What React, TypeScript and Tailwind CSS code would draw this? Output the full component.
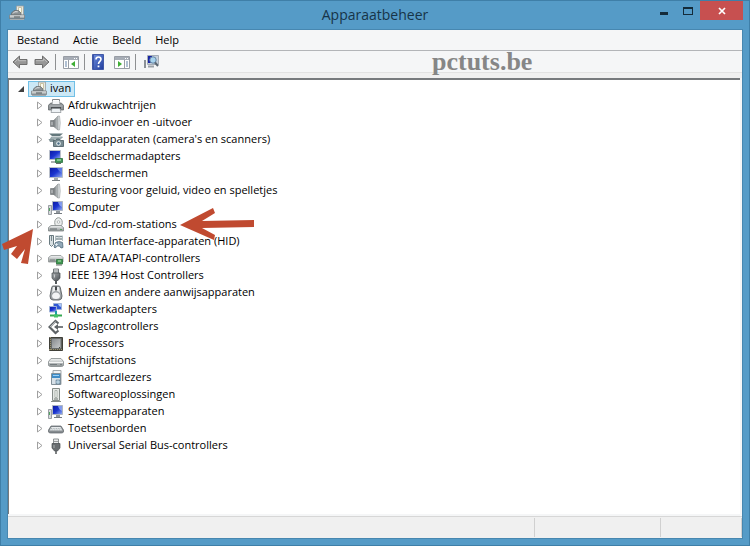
import type { ReactNode } from 'react';
import { clsx } from 'clsx';

interface Device {
  name: string;
  icon: ReactNode;
  marked?: boolean;
}

function Svg({ children }: { children: ReactNode }) {
  return (
    <svg viewBox="0 0 16 16" className="size-4 shrink-0" aria-hidden="true">
      {children}
    </svg>
  );
}

/* Gradients shared by all device icons */
function Gradients() {
  return (
    <svg className="absolute size-0" aria-hidden="true">
      <defs>
        <linearGradient id="metal" x1="0" y1="0" x2="0" y2="1">
          <stop offset="0" stopColor="#f4f6f6" />
          <stop offset="1" stopColor="#8d9394" />
        </linearGradient>
        <linearGradient id="dark" x1="0" y1="0" x2="1" y2="1">
          <stop offset="0" stopColor="#a9adb0" />
          <stop offset="1" stopColor="#4b5054" />
        </linearGradient>
        <linearGradient id="cone" x1="0" y1="0" x2="1" y2="0">
          <stop offset="0" stopColor="#6e7376" />
          <stop offset="1" stopColor="#c9cdcf" />
        </linearGradient>
        <linearGradient id="chip" x1="0" y1="0" x2="1" y2="1">
          <stop offset="0" stopColor="#84888b" />
          <stop offset="1" stopColor="#c9cccd" />
        </linearGradient>
        <linearGradient id="screen" x1="0" y1="0" x2="1" y2="1">
          <stop offset="0" stopColor="#0a18a0" />
          <stop offset="0.5" stopColor="#1c35d0" />
          <stop offset="1" stopColor="#9db8f4" />
        </linearGradient>
        <linearGradient id="help" x1="0" y1="0" x2="1" y2="1">
          <stop offset="0" stopColor="#6f8fe0" />
          <stop offset="1" stopColor="#1f3c9c" />
        </linearGradient>
      </defs>
    </svg>
  );
}

const ManagerIcon = () => (
  <Svg>
    <path d="M7.5 1h7v9h-7z" fill="#e4e8e5" stroke="#9aa09d" strokeWidth=".8" />
    <path d="M9.5 2.5h3v5h-3z" fill="#fbfaf0" stroke="#c0b78e" strokeWidth=".8" />
    <path d="M2.5 10V8L5 5.5h4.5L12 8v2z" fill="#8b9193" stroke="#656b6e" strokeWidth=".7" />
    <path d="M4 8.500 5.700 6.800h3" fill="none" stroke="#e6e8e9" />
    <path d="M.5 10h15v3.500H.5z" fill="url(#metal)" stroke="#777d80" strokeWidth=".7" />
    <path d="M5 12h6" stroke="#535a5d" />
    <path d="M1 14.500h14" stroke="#a6acae" />
  </Svg>
);

const PrinterIcon = () => (
  <Svg>
    <path d="M4.500 1.500h7v5h-7z" fill="#fff" stroke="#85898c" />
    <path d="M1.500 6 3 5h10l1.500 1 1 1.500V12H.5V7.500z" fill="#8f9497" stroke="#585d60" strokeWidth=".7" />
    <path d="M4.500 3h7v3h-7z" fill="#f5f6f7" />
    <path d="M1.500 8h13" stroke="#b4b8bb" />
    <path d="M3 10h10" stroke="#34393c" strokeWidth="1.500" />
    <path d="M4 10.500h8l1 4H3z" fill="#eef2f5" stroke="#888e92" strokeWidth=".7" />
  </Svg>
);

const SpeakerIcon = () => (
  <Svg>
    <path d="M2.500 5.500H6v6H2.500z" fill="#85898c" stroke="#6a6e71" strokeWidth=".6" />
    <path d="M5.500 5.500 10 1v14l-4.500-3.500z" fill="url(#cone)" stroke="#85898b" strokeWidth=".5" />
    <path d="M10 1h1.500q1.500 7 0 14H10z" fill="#dfe2e3" stroke="#999ea1" strokeWidth=".6" />
    <path d="M4 7v3" stroke="#c9ccce" />
  </Svg>
);

const CameraIcon = () => (
  <Svg>
    <path d="M1 1.500h14l-3 2.500H4z" fill="#63777b" />
    <path d="M3.500 5h11l-2 2h-10z" fill="#b8c5c7" stroke="#71858a" strokeWidth=".7" />
    <path d="M.5 7h6v3H2z" fill="#849599" />
    <path d="M5.500 8.500h2l1-1.500h3l1 1.500h3v6h-10z" fill="#788b91" stroke="#485b62" strokeWidth=".8" />
    <circle cx="10.500" cy="11.500" r="2.300" fill="#e5edf0" />
    <circle cx="10.500" cy="11.500" r="1.200" fill="#496b83" />
  </Svg>
);

const MonitorIcon = () => (
  <Svg>
    <path d="M1.500 1.500h13v10h-13z" fill="url(#screen)" stroke="#b9bfca" />
    <path d="M9 2h5v5q-3-1-5-5" fill="#6d90ec" opacity=".7" />
    <path d="M6 12h4v2H6z" fill="#a3a8ac" />
    <path d="M4 14.500h8" stroke="#777d81" />
  </Svg>
);

const AdapterIcon = () => (
  <Svg>
    <path d="M1.500 1.500h11v9h-11z" fill="url(#screen)" stroke="#b9bfca" />
    <path d="M3 13h5" stroke="#929799" strokeWidth="1.500" />
    <path d="M7.500 9.500h7v4h-7z" fill="#3d9554" stroke="#2a6f3f" strokeWidth=".8" />
    <path d="M9 11h4" stroke="#c5ecc9" />
    <path d="M8 14.500h5" stroke="#686f68" />
  </Svg>
);

const ComputerIcon = () => (
  <Svg>
    <path d="M.5 5.500h3v9h-3z" fill="#d6d9dc" stroke="#858b90" strokeWidth=".8" />
    <path d="M1.500 8v3" stroke="#52a260" />
    <path d="M4.500 1.500h10v9h-10z" fill="url(#screen)" stroke="#aeb6c2" />
    <path d="M10 2h4v5q-3-1-4-5" fill="#98b0f4" opacity=".8" />
    <path d="M8 11h4v2H8z" fill="#92989e" />
    <path d="M6 13.500h8" stroke="#737a80" />
  </Svg>
);

const DiscDriveIcon = () => (
  <Svg>
    <ellipse cx="10.500" cy="5.500" rx="3.800" ry="4.800" fill="#eceeed" stroke="#969c9b" />
    <circle cx="10.500" cy="5" r="1.300" fill="#fff" stroke="#a5aaa9" strokeWidth=".8" />
    <path d="M3 8.500h10l2.500 2v3.500H.5v-3.500z" fill="url(#metal)" stroke="#7f8585" strokeWidth=".8" />
    <path d="M2 12h7" stroke="#666d6e" />
    <path d="M12 12.500h2" stroke="#54a45b" />
  </Svg>
);

const HidIcon = () => (
  <Svg>
    <path d="M1.500 1.500h4v9l-2 2-2-2z" fill="#d9e0e2" stroke="#697a80" />
    <path d="M3.500 2v5" stroke="#77888e" />
    <path d="M7 2.500h8M7 5h8" stroke="#829297" strokeWidth="1.500" />
    <path d="M7.500 2v5M11 2v4M14.500 2v5" stroke="#afbcc0" />
    <path d="M7.500 8.500q4-2 7 0l.5 5-2 .5-1.500-2h-2L7 14l-1-1z" fill="#91a8b7" stroke="#50697a" strokeWidth=".8" />
    <path d="M8.500 9v3M7 10.500h3" stroke="#e9f1f6" strokeWidth=".8" />
  </Svg>
);

const IdeIcon = () => (
  <Svg>
    <path d="M3 4.500h10l2 2v4.500H.5V6.500z" fill="url(#metal)" stroke="#8d9393" strokeWidth=".8" />
    <path d="M2 9h5" stroke="#777e7e" />
    <path d="M8.500 8.500h6v4.500h-6z" fill="#3f9851" stroke="#2e713e" strokeWidth=".8" />
    <path d="M10 10h3" stroke="#bde4bd" />
    <path d="M8 14h6" stroke="#6b716c" />
  </Svg>
);

const PlugIcon = () => (
  <Svg>
    <path d="M5.500 1h5v4h-5z" fill="#e3e6e8" stroke="#71777a" />
    <path d="M7 2.500v1M9 2.500v1" stroke="#35393b" />
    <path d="M4 5h8v5l-2 2.500H6L4 10z" fill="url(#dark)" stroke="#43474a" strokeWidth=".7" />
    <path d="M8 12v4" stroke="#54595c" strokeWidth="2" />
    <path d="M6.500 6.500v3" stroke="#c6c9cb" />
  </Svg>
);

const MouseIcon = () => (
  <Svg>
    <path d="M5 1h6q1 0 1.300 1.500L14 11q0 4-3 4H5q-3 0-3-4l1.700-8.500Q4 1 5 1z" fill="#9da2a5" stroke="#5c6164" strokeWidth=".9" />
    <path d="M5 2 3.700 9.500Q4 6 8 6t4.300 3.500L11 2H9v3H7V2z" fill="#e9ebec" />
    <path d="M4 10.500Q5 7.500 8 7.500t4 3q0 3.500-4 3.500t-4-3.500z" fill="#f3f4f5" />
    <path d="M8 1.500v4" stroke="#303436" strokeWidth="1.600" />
  </Svg>
);

const NetworkIcon = () => (
  <Svg>
    <path d="M5.500 1.500h8v6h-8z" fill="#3159d4" stroke="#9eb2d6" />
    <path d="M1.500 4.500h7v5.500h-7z" fill="url(#screen)" stroke="#9eb2d6" />
    <path d="M10 2h3v3q-2 0-3-3" fill="#a8c5fb" />
    <path d="M8 9v5" stroke="#1c9fa3" strokeWidth="2" />
    <path d="M2 13.500h12" stroke="#35a852" strokeWidth="2" />
    <path d="M6 12.500h4v3H6z" fill="#45c468" />
  </Svg>
);

const StorageIcon = () => (
  <Svg>
    <path d="M10.500 4.500 7.500 2 1.500 8l6 6 3-2.500" fill="none" stroke="#5e6366" strokeWidth="2.200" />
    <path d="M2 8 7.500 2.500" stroke="#b4b8bb" />
    <path d="M8 8h7" stroke="#6b7073" strokeWidth="1.800" />
    <path d="m6 8 4-3v6z" fill="#5e6366" />
  </Svg>
);

const ProcessorIcon = () => (
  <Svg>
    <path d="M1.500 1.500h13v13h-13z" fill="#55554e" stroke="#3f3f38" />
    <path d="M2.500 1v14M1 13.500h14" stroke="#9a9270" strokeDasharray="1 1" />
    <path d="M3.500 2.500h9.500v10H3.500z" fill="url(#chip)" stroke="#686c6c" />
    <path d="M11 11h1v1h-1z" fill="#41463f" />
  </Svg>
);

const DriveIcon = () => (
  <Svg>
    <path d="M3 5.500h10l2.500 3v4q-1 1-2 1h-11q-1 0-2-1v-4z" fill="url(#metal)" stroke="#858b8d" strokeWidth=".8" />
    <path d="M1 9.500h14" stroke="#f4f5f5" />
    <path d="M2 11.500h7" stroke="#747b7e" />
    <circle cx="13" cy="11.500" r=".7" fill="#5b666a" />
  </Svg>
);

const SmartcardIcon = () => (
  <Svg>
    <path d="M5 .5h8v14H5z" fill="#f1f3f4" stroke="#a2a8ab" />
    <path d="M3.500 3.500h9v11h-9z" fill="#d7e1e8" stroke="#839199" />
    <path d="M4 4h8v4H4z" fill="#3f8cc7" />
    <path d="M5 5.500h6" stroke="#9ed1f3" />
    <path d="M8 10h4v4H8z" fill="#87acc3" stroke="#6d8596" strokeWidth=".7" />
    <path d="M8 12h4M10 10v4" stroke="#d7e9f3" strokeWidth=".7" />
  </Svg>
);

const SoftwareIcon = () => (
  <Svg>
    <path d="M4.500 1.500h7v12h-7z" fill="#e5e8e5" stroke="#858c88" />
    <path d="M7 3.500h2v7H7z" fill="#f9faf8" stroke="#9da49d" strokeWidth=".8" />
    <path d="M6 12h4" stroke="#6f7772" />
    <path d="M3 14.500h10" stroke="#868d88" />
  </Svg>
);

const KeyboardIcon = () => (
  <Svg>
    <path d="M3 5h10l2.500 4v2q-.5 1-2 1h-11q-1.500 0-2-1V9z" fill="#858b8f" stroke="#5d6367" strokeWidth=".7" />
    <path d="M3.500 6h9l2 3.500h-13z" fill="#e8ebed" />
    <path d="M3 7.500h10M2.500 9h11" stroke="#9ba1a5" strokeDasharray="1 .7" strokeWidth=".8" />
  </Svg>
);

const UsbIcon = () => (
  <Svg>
    <path d="M5.500 1h5v5h-5z" fill="#e8eaeb" stroke="#8b9092" />
    <path d="M7 3v1M9 3v1" stroke="#4c5153" />
    <path d="M4 5.500h8V10l-2.500 3h-3L4 10z" fill="#696e71" stroke="#494d50" strokeWidth=".7" />
    <path d="M8 13v3" stroke="#55595b" strokeWidth="1.500" />
    <path d="M6 7v3" stroke="#a9adaf" />
  </Svg>
);

const devices: Device[] = [
  { name: 'Afdrukwachtrijen', icon: <PrinterIcon /> },
  { name: 'Audio-invoer en -uitvoer', icon: <SpeakerIcon /> },
  { name: "Beeldapparaten (camera's en scanners)", icon: <CameraIcon /> },
  { name: 'Beeldschermadapters', icon: <AdapterIcon /> },
  { name: 'Beeldschermen', icon: <MonitorIcon /> },
  { name: 'Besturing voor geluid, video en spelletjes', icon: <SpeakerIcon /> },
  { name: 'Computer', icon: <ComputerIcon /> },
  { name: 'Dvd-/cd-rom-stations', icon: <DiscDriveIcon />, marked: true },
  { name: 'Human Interface-apparaten (HID)', icon: <HidIcon /> },
  { name: 'IDE ATA/ATAPI-controllers', icon: <IdeIcon /> },
  { name: 'IEEE 1394 Host Controllers', icon: <PlugIcon /> },
  { name: 'Muizen en andere aanwijsapparaten', icon: <MouseIcon /> },
  { name: 'Netwerkadapters', icon: <NetworkIcon /> },
  { name: 'Opslagcontrollers', icon: <StorageIcon /> },
  { name: 'Processors', icon: <ProcessorIcon /> },
  { name: 'Schijfstations', icon: <DriveIcon /> },
  { name: 'Smartcardlezers', icon: <SmartcardIcon /> },
  { name: 'Softwareoplossingen', icon: <SoftwareIcon /> },
  { name: 'Systeemapparaten', icon: <ComputerIcon /> },
  { name: 'Toetsenborden', icon: <KeyboardIcon /> },
  { name: 'Universal Serial Bus-controllers', icon: <UsbIcon /> },
];

function TitleBar() {
  return (
    <header className="grid h-7 grid-cols-[1fr_auto_1fr] items-start text-[#173448]">
      <div className="pt-1 pl-0.5">
        <ManagerIcon />
      </div>
      <h1 className="pt-1 text-[14px] leading-5">Apparaatbeheer</h1>
      <div className="flex justify-end">
        <button type="button" aria-label="Minimaliseren" className="flex h-5 w-6 items-center justify-center">
          <span className="mt-1 h-[3px] w-2 bg-[#142b3a]" />
        </button>
        <button type="button" aria-label="Maximaliseren" className="flex h-5 w-6 items-center justify-center">
          <span className="h-2 w-[10px] border border-t-2 border-[#142b3a]" />
        </button>
        <button
          type="button"
          aria-label="Sluiten"
          className="flex h-[19px] w-[43px] items-center justify-center bg-[#c75050]"
        >
          <svg viewBox="0 0 8 8" className="size-2">
            <path d="m1 1 6 6M7 1 1 7" stroke="#fff" strokeWidth="1.700" />
          </svg>
        </button>
      </div>
    </header>
  );
}

function MenuBar() {
  return (
    <nav className="flex h-5 items-center pl-0.5">
      {['Bestand', 'Actie', 'Beeld', 'Help'].map((item) => (
        <button key={item} type="button" className="px-[7px] leading-5">
          {item}
        </button>
      ))}
    </nav>
  );
}

const Separator = () => <div className="mx-[5px] h-4 w-px bg-[#8e9092]" />;

function ArrowIcon({ forward }: { forward?: boolean }) {
  return (
    <svg viewBox="0 0 16 16" className={clsx('size-4', forward && '-scale-x-100')} aria-hidden="true">
      <path d="M1 8 7.500 2v3.500H15v5H7.500V14z" fill="#979797" stroke="#6e6e6e" />
      <path d="M3 8 6.500 4.700v2H14" fill="none" stroke="#bdbdbd" />
    </svg>
  );
}

function PanelIcon({ right }: { right?: boolean }) {
  return (
    <Svg>
      <path d="M.5 2.500h15v12H.5z" fill="#fff" stroke="#989da5" />
      <path d="M1 3h14v3H1z" fill="#a7adb6" />
      <path d="M11 4.500h1M13 4.500h1" stroke="#fff" />
      {right ? (
        <>
          <path d="M10.500 6v8" stroke="#989da5" />
          <path d="m4 7 4 3-4 3z" fill="#3fae35" />
          <path d="M12 8h2M12 10h2M12 12h2" stroke="#6382a8" />
        </>
      ) : (
        <>
          <path d="M5.500 6v8" stroke="#989da5" />
          <path d="m12 7-4 3 4 3z" fill="#3fae35" />
          <path d="M2 8h2M2 10h2M2 12h2" stroke="#6382a8" />
        </>
      )}
    </Svg>
  );
}

function HelpIcon() {
  return (
    <Svg>
      <path d="M2.500.5h11v15h-11z" fill="url(#help)" stroke="#4159a8" />
      <path d="M3.500 1v14" stroke="#3b55a9" />
      <path d="M6 5.500q0-2.500 2.500-2.500T11 5.300C11 7.300 8.500 7.500 8.500 10" fill="none" stroke="#fff" strokeWidth="1.600" />
      <path d="M7.600 11.500h1.800v1.800H7.600z" fill="#fff" />
    </Svg>
  );
}

function ScanIcon() {
  return (
    <Svg>
      <path d="M1 6h2v8H1z" fill="#8b9197" />
      <path d="M4.500 1.500h11v9h-11z" fill="#c6d0dc" stroke="#a5adb6" />
      <path d="M5 2h4v7H5z" fill="#1724a5" />
      <circle cx="10" cy="6" r="3.200" fill="#a7d3ef" stroke="#6686a4" />
      <path d="m12 8.500 3 3.500" stroke="#5a6672" strokeWidth="2" />
      <path d="M5 12.500h6" stroke="#9aa1a7" strokeWidth="2" />
    </Svg>
  );
}

/* Stacked above the strip below it, so the descender of the site name stays whole */
function Toolbar() {
  return (
    <div className="relative z-10 flex h-[22px] items-center border-t border-[#b3b5b8] pl-1">
      <button type="button" aria-label="Vorige">
        <ArrowIcon />
      </button>
      <button type="button" aria-label="Volgende" className="ml-1.5">
        <ArrowIcon forward />
      </button>
      <Separator />
      <button type="button" aria-label="Consolestructuur" className="ml-0.5">
        <PanelIcon />
      </button>
      <Separator />
      <button type="button" aria-label="Help">
        <HelpIcon />
      </button>
      <button type="button" aria-label="Actievenster" className="ml-2">
        <PanelIcon right />
      </button>
      <Separator />
      <button type="button" aria-label="Zoeken naar gewijzigde hardware" className="ml-0.5">
        <ScanIcon />
      </button>
      <span className="ml-[273px] font-['Liberation_Serif',serif] text-[26px] leading-5 font-bold text-[#868686]">
        pctuts.be
      </span>
    </div>
  );
}

function Expander() {
  return (
    <button type="button" aria-label="Uitvouwen" aria-expanded={false}>
      <svg viewBox="0 0 6 9" className="h-[9px] w-[6px]">
        <path d="M.5 1v7L5 4.500z" fill="#fff" stroke="#a0a0a0" />
      </svg>
    </button>
  );
}

/* Hand-drawn pointers on both sides of the marked row */
function Markers() {
  return (
    <>
      <svg viewBox="0 0 32 36" className="absolute top-3 -left-2 h-9 w-8" aria-hidden="true">
        <path d="M32 1 1 16l2 6 13-4-6 8 6 5 8-10-4 14 7 1z" fill="#c04a30" />
      </svg>
      <svg viewBox="0 0 75 34" className="absolute -top-2 left-[171px] h-[34px] w-[75px]" aria-hidden="true">
        <path d="M0 17 33 0l2 5-13 8 52-1v7l-52 1 13 7-1 5z" fill="#c04a30" />
      </svg>
    </>
  );
}

function DeviceRow({ name, icon, marked }: Device) {
  return (
    <li className="relative flex h-[17px] items-center pl-7">
      <Expander />
      <span className="ml-[5px] flex items-center gap-1">
        {icon}
        {name}
      </span>
      {marked && <Markers />}
    </li>
  );
}

function DeviceTree() {
  return (
    <main className="mr-0.5 flex-1 border-t-2 border-l border-[#777a7d] bg-white">
      <div className="flex h-[17px] items-center pl-2">
        <button type="button" aria-label="Samenvouwen" aria-expanded={true}>
          <svg viewBox="0 0 8 8" className="size-2">
            <path d="M7 1v6H1z" fill="#404040" />
          </svg>
        </button>
        <span className="ml-[3px] flex h-4 items-center gap-[3px] border border-[#70c0e7] bg-[#cbe8f6] pr-[3px] pl-0.5">
          <ManagerIcon />
          ivan
        </span>
      </div>
      <ul>
        {devices.map((device) => (
          <DeviceRow key={device.name} {...device} />
        ))}
      </ul>
    </main>
  );
}

export default function App() {
  return (
    <div className="flex min-h-screen flex-col border border-[#3f7fa8] bg-[#559bc7] px-[6px] pb-[6px] font-['Open_Sans','Noto_Sans',sans-serif] text-[11px] whitespace-nowrap text-black">
      <Gradients />
      <TitleBar />
      <div className="flex flex-1 flex-col border border-[#4787b0] bg-[#f5f6f7]">
        <MenuBar />
        <Toolbar />
        <div className="h-[6px] border-t border-[#e2e2e2] bg-[#f0f0f0]" />
        <DeviceTree />
        <footer className="mt-0.5 flex h-[22px] border-t border-[#d7d7d7] bg-[#f0f0f0] py-px">
          <div className="flex-1" />
          <div className="w-[126px] border-l border-[#d0d0d0]" />
          <div className="w-[82px] border-x border-[#d0d0d0]" />
        </footer>
      </div>
    </div>
  );
}
